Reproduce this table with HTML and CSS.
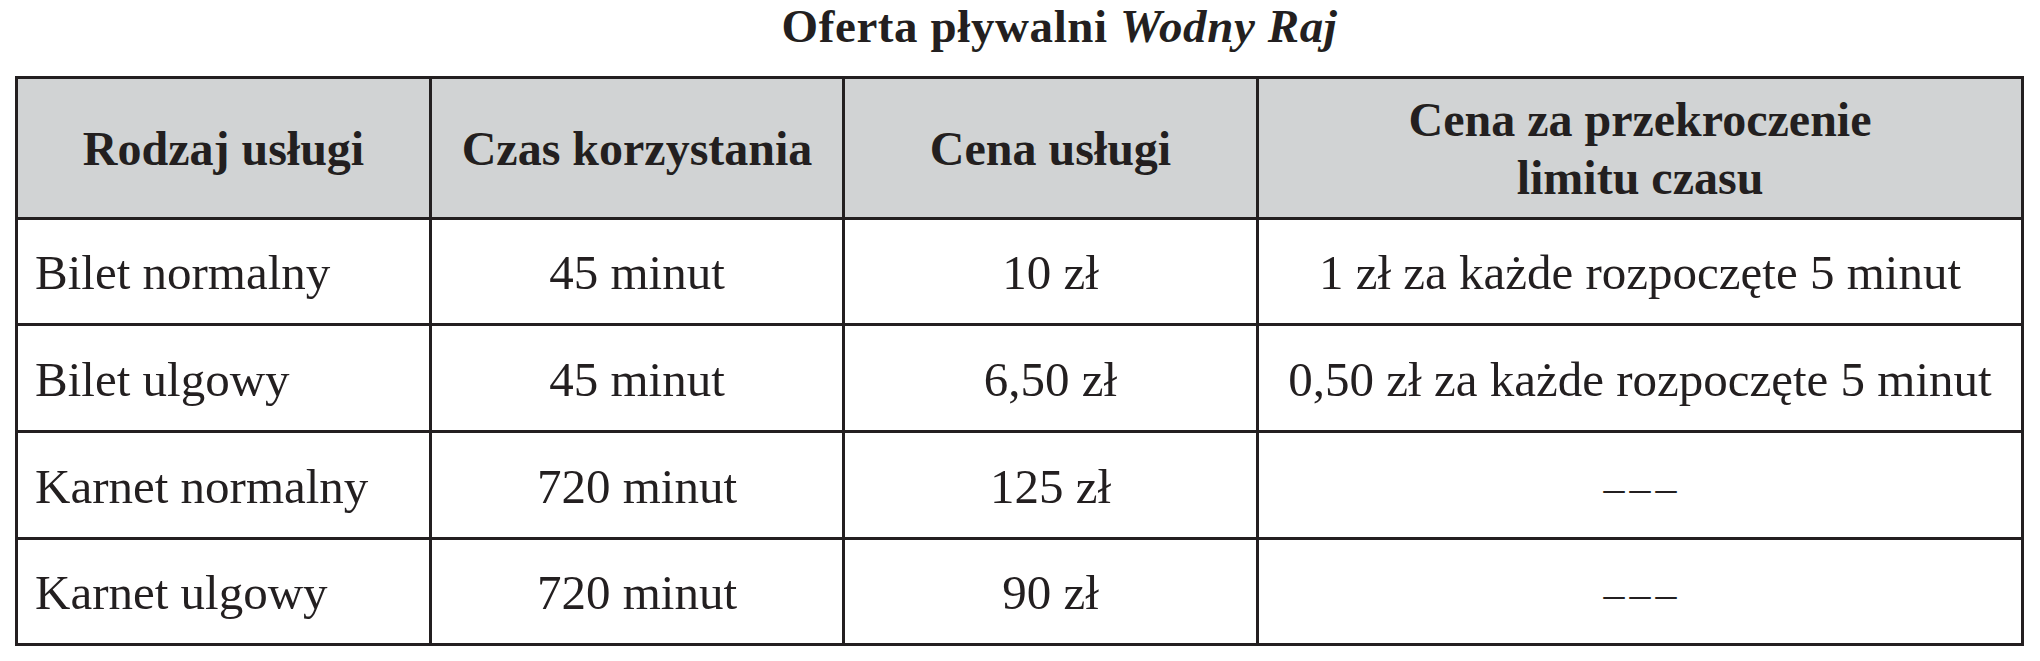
FILE: index.html
```html
<!DOCTYPE html>
<html lang="pl">
<head>
<meta charset="utf-8">
<title>Oferta pływalni Wodny Raj</title>
<link rel="stylesheet" href="styles.css">
</head>
<body>
<div class="sheet">
  <h1 class="title">Oferta pływalni <em>Wodny Raj</em></h1>
  <table class="offer">
    <colgroup>
      <col class="c1"><col class="c2"><col class="c3"><col class="c4">
    </colgroup>
    <thead>
      <tr>
        <th>Rodzaj usługi</th>
        <th>Czas korzystania</th>
        <th>Cena usługi</th>
        <th>Cena za przekroczenie<br>limitu czasu</th>
      </tr>
    </thead>
    <tbody>
      <tr class="r1">
        <td class="name">Bilet normalny</td>
        <td>45 minut</td>
        <td>10 zł</td>
        <td>1 zł za każde rozpoczęte 5 minut</td>
      </tr>
      <tr class="r2">
        <td class="name">Bilet ulgowy</td>
        <td>45 minut</td>
        <td>6,50 zł</td>
        <td>0,50 zł za każde rozpoczęte 5 minut</td>
      </tr>
      <tr class="r2">
        <td class="name">Karnet normalny</td>
        <td>720 minut</td>
        <td>125 zł</td>
        <td><span class="dash">–––</span></td>
      </tr>
      <tr class="r1">
        <td class="name">Karnet ulgowy</td>
        <td>720 minut</td>
        <td>90 zł</td>
        <td><span class="dash">–––</span></td>
      </tr>
    </tbody>
  </table>
</div>
</body>
</html>
```

FILE: styles.css
```css
html, body {
  margin: 0;
  padding: 0;
  background: #ffffff;
}

body {
  font-family: "Liberation Serif", "Times New Roman", serif;
  color: #231f20;
}

.sheet {
  width: 2009px;
  padding-left: 15px;
}

.title {
  margin: 0 0 24px 0;
  padding-left: 80px;
  font-size: 47px;
  line-height: 52px;
  font-weight: bold;
  letter-spacing: 0.6px;
  text-align: center;
}

.title em {
  font-style: italic;
}

.offer {
  table-layout: fixed;
  width: 2009px;
  border-collapse: separate;
  border-spacing: 0;
  border-top: 3px solid #231f20;
  border-left: 3px solid #231f20;
}

.offer .c1 { width: 414px; }
.offer .c2 { width: 413px; }
.offer .c3 { width: 414px; }
.offer .c4 { width: 765px; }

.offer th,
.offer td {
  box-sizing: border-box;
  border-right: 3px solid #231f20;
  border-bottom: 3px solid #231f20;
  text-align: center;
  vertical-align: middle;
  white-space: nowrap;
  padding: 0;
}

.offer th {
  height: 141px;
  background: #d1d3d4;
  font-size: 48px;
  line-height: 58px;
  font-weight: bold;
  padding-top: 2px;
}

.offer td {
  font-size: 49px;
  line-height: 58px;
  font-weight: normal;
  padding-top: 3px;
}

.offer tr.r1 td { height: 106px; }
.offer tr.r2 td { height: 107px; }

.offer td.name {
  text-align: left;
  padding-left: 17px;
}

.offer .dash {
  font-size: 42px;
  letter-spacing: 5px;
  margin-right: -5px;
}
```
